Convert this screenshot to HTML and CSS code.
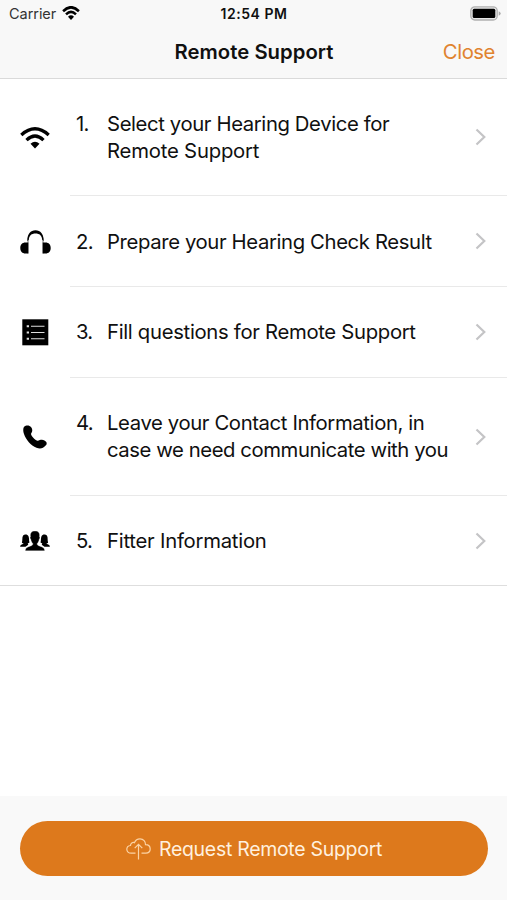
FILE: index.html
```html
<!DOCTYPE html>
<html lang="en">
<head>
<meta charset="utf-8">
<title>Remote Support</title>
<link rel="stylesheet" href="styles.css">
</head>
<body>
<div class="screen">
  <header class="header">
    <div class="status">
      <div class="carrier"><span>Carrier</span>
        <svg width="18" height="14" viewBox="0 0 30 22" preserveAspectRatio="none"><path d="M1.800 8.300Q15-4.200 28.200 8.300M6.700 13.200Q15 5 23.300 13.200" fill="none" stroke="#000" stroke-width="4.200"/><path d="M10 16.700Q15 12.200 20 16.700L15 22z"/></svg>
      </div>
      <div class="time">12:54 PM</div>
      <svg class="battery" width="31" height="15" viewBox="0 0 31 15"><rect x=".8" y=".8" width="26.4" height="13.2" rx="4" fill="#e8e8e8" stroke="#b0b0b0" stroke-width="1.3"/><rect x="2.7" y="2.7" width="22.6" height="9.4" rx="1.500" fill="#000"/><path d="M28.7 5.2q2 .7 2 2.3t-2 2.3z" fill="#aaa"/></svg>
    </div>
    <div class="nav"><span></span><h1>Remote Support</h1><a class="close">Close</a></div>
  </header>
  <main class="list">
    <section class="row tall">
      <div class="icon"><svg width="30" height="22" viewBox="0 0 30 22"><path d="M1.300 7.900Q15-4.300 28.700 7.900M6.500 13.100Q15 5 23.500 13.100" fill="none" stroke="#000" stroke-width="3.300"/><path d="M10.500 16.700Q15 12.600 19.500 16.700L15 21.500z"/></svg></div>
      <div class="body"><span class="num">1.</span><p><span class="t1">Select your Hearing Device for</span><br><span class="t2">Remote Support</span></p><svg class="chev" width="12" height="18" viewBox="0 0 12 18"><path id="chevron" d="M1.5 1.5 9.3 9 1.5 16.5"/></svg></div>
    </section>
    <section class="row short">
      <div class="icon"><svg width="31" height="24" viewBox="0 0 31 24"><path d="M8 23.500V10.500C8 4.500 11 1.800 15.500 1.800S23 4.500 23 10.500v13" fill="none" stroke="#555" stroke-width=".8"/><path d="M7.300 11C7.300 4 10.500 .3 15.500 .3S23.700 4 23.700 11l-1.400-1C21.800 5.500 19.500 3.500 15.500 3.500S9.200 5.500 8.700 10zM8.300 12.500v11H5.500C2.200 23.500 .3 21.300 .3 18S2.200 12.500 5.500 12.500zM22.700 12.500v11h2.800c3.300 0 5.200-2.200 5.200-5.500s-1.900-5.500-5.200-5.500z"/></svg></div>
      <div class="body"><span class="num">2.</span><p class="t3">Prepare your Hearing Check Result</p><svg class="chev" width="12" height="18" viewBox="0 0 12 18"><use href="#chevron"/></svg></div>
    </section>
    <section class="row short questions">
      <div class="icon"><svg width="27" height="27" viewBox="0 0 27 27"><rect x=".3" y=".3" width="26" height="26"/><path d="M9 7.300h13.500M9 13.500h13.500M9 19.700h13.500" stroke="#ddd" stroke-width="1.100"/><path d="M4.700 7.300H7M4.700 13.500H7M4.700 19.700H7" stroke="#ddd" stroke-width="2"/></svg></div>
      <div class="body"><span class="num">3.</span><p class="t4">Fill questions for Remote Support</p><svg class="chev" width="12" height="18" viewBox="0 0 12 18"><use href="#chevron"/></svg></div>
    </section>
    <section class="row tall4">
      <div class="icon"><svg width="24" height="24" viewBox="0 0 24 24"><path d="M1.100 1.800C3-.1 6.400-.1 8.200 2.200C9.700 4.200 9.500 6.500 8.400 8C7.700 9.100 8 9.800 9 11.200C10.300 13 12 14.700 13.700 15.500C14.900 16.100 15.600 15.700 16.800 15.100C19.200 14 22.100 15 23.300 17C24 18.300 23.700 19.500 22.600 20.600C20.200 23.600 17 24.200 13.500 22.800C7.800 20.400 3 14.700 1 9C-.1 6 .0 3.200 1.100 1.800Z"/></svg></div>
      <div class="body"><span class="num">4.</span><p><span class="t5">Leave your Contact Information, in</span><br><span class="t6">case we need communicate with you</span></p><svg class="chev" width="12" height="18" viewBox="0 0 12 18"><use href="#chevron"/></svg></div>
    </section>
    <section class="row short5">
      <div class="icon"><svg width="30" height="20" viewBox="0 0 30 20"><g id="side"><path d="M.1 15.700C.2 13.700 1.800 13.700 3.800 12.600C3 12.200 2.400 12.100 1.900 11.700C2.700 9 2 6.500 2.900 5C3.700 3.200 7.500 2.800 8.500 5.200C9.300 7 8.800 9.300 9.500 11.500L7.700 12.500L8.300 13.700L5.500 15.700Z"/></g><use href="#side" transform="matrix(-1 0 0 1 30 0)"/><path d="M5.300 19.800C5.400 16.800 6.800 16.300 9.500 15.400C12.200 14.500 12.900 14.100 12.800 12.600C11.400 11.300 11 9.500 10.700 8C9.900 7.700 9.900 6.300 10.500 5.800C9.900 2 11.600 .1 15 .1S20.100 2 19.500 5.800C20.100 6.300 20.100 7.700 19.300 8C19 9.500 18.600 11.300 17.200 12.600C17.100 14.100 17.800 14.500 20.500 15.400C23.200 16.300 24.600 16.800 24.700 19.800Z" stroke="#fff" stroke-width=".3"/></svg></div>
      <div class="body"><span class="num">5.</span><p class="t7">Fitter Information</p><svg class="chev" width="12" height="18" viewBox="0 0 12 18"><use href="#chevron"/></svg></div>
    </section>
  </main>
  <footer class="footer">
    <button class="request"><svg width="25" height="22" viewBox="0 0 25 22"><path d="M9.500 15.200H5.200C2.500 15.200 .8 13.500 .8 11.300C.8 9 2.500 7.700 4.500 7.500C4.300 5.300 6.700 3.700 8.500 4.600C9.500 2.100 11.500 .8 14 .8C17.500 .8 19.700 3.500 19.500 6.700C22.500 6.800 24.200 8.700 24.200 11C24.200 13.500 22.400 15.200 19.800 15.200H15.500M12.500 21.500V6.500M8.700 10.200 12.500 6.400 16.300 10.200" fill="none" stroke="#fbd3a5" stroke-width="1.200"/></svg><span>Request Remote Support</span></button>
  </footer>
</div>
</body>
</html>
```

FILE: styles.css
```css
* { box-sizing: border-box; }
body { margin: 0; background: #fff; font-family: Inter, "Liberation Sans", sans-serif; color: #101010; }
h1, p { margin: 0; }
svg { display: block; flex: none; }
.screen { width: 507px; height: 900px; display: flex; flex-direction: column; overflow: hidden; }
.header { height: 79px; background: #f8f8f8; border-bottom: 1px solid #dadada; }
.status { height: 27px; display: grid; grid-template-columns: 1fr auto 1fr; align-items: center; padding: 0 6px 0 9px; }
.carrier { display: flex; align-items: center; gap: 6px; font-size: 14.5px; letter-spacing: -0.05px; color: #333; }
.carrier svg { margin-top: -1px; }
.time { font-size: 14px; font-weight: 600; letter-spacing: 0.55px; margin-left: -2px; }
.battery { justify-self: end; }
.nav { height: 48px; display: grid; grid-template-columns: 1fr auto 1fr; align-items: center; padding: 0 12px 0 13px; }
h1 { font-size: 20.3px; font-weight: 600; letter-spacing: 0.03px; }
.close { justify-self: end; font-size: 20.3px; letter-spacing: -0.45px; color: #e08330; }
.list { border-bottom: 1px solid #dedede; }
.row { display: grid; grid-template-columns: 70px 1fr; }
.tall { height: 117px; }
.short { height: 91px; }
.tall4 { height: 118px; }
.short5 { height: 89px; }
.icon { display: flex; align-items: center; justify-content: center; }
.body { display: grid; grid-template-columns: 30px 1fr 12px; align-items: center; padding: 0 20px 0 7px; border-bottom: 1px solid #e9e9e9; }
.row:last-child .body { border-bottom: 0; }
.num, .body p { font-size: 20.3px; line-height: 27px; white-space: nowrap; }
.num { margin-left: -1px; letter-spacing: -0.7px; }
.tall .num, .tall4 .num { align-self: start; margin-top: 31px; }
.tall .body p, .tall4 .body p { align-self: start; margin-top: 31px; }
.questions .num, .questions .body p { margin-bottom: 2px; }
.t1 { letter-spacing: -0.38px; }
.t2 { letter-spacing: -0.2px; }
.t3 { letter-spacing: -0.37px; }
.t4 { letter-spacing: -0.31px; }
.t5 { letter-spacing: -0.38px; }
.t6 { letter-spacing: -0.43px; }
.t7 { letter-spacing: -0.24px; }
.chev { fill: none; stroke: #c4c4c6; stroke-width: 2.2; }
.footer { height: 104px; margin-top: auto; padding: 25px 20px; background: #f9f9f9; }
.request { width: 468px; height: 55px; padding: 0; border: 0; border-radius: 28px; background: #dd791c; display: flex; align-items: center; justify-content: center; gap: 8px; font: 19.5px Inter, "Liberation Sans", sans-serif; letter-spacing: -0.3px; color: #fff0df; }
```
